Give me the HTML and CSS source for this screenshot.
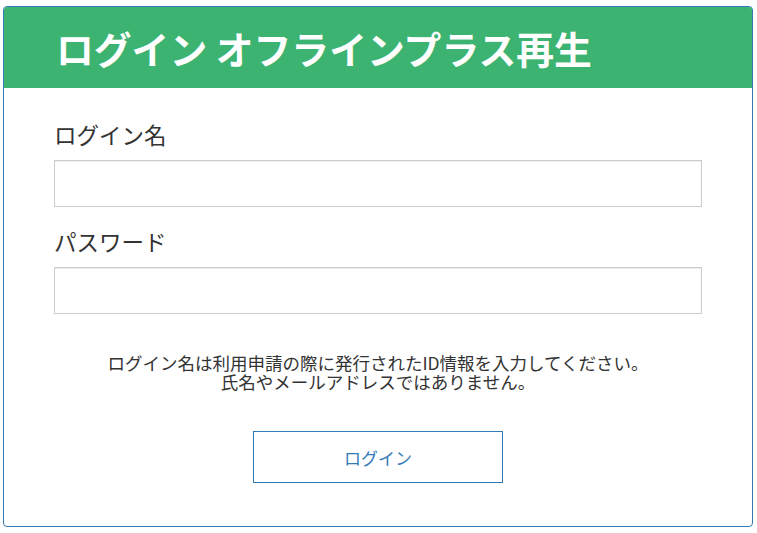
FILE: index.html
```html
<!DOCTYPE html>
<html lang="ja">
<head>
<meta charset="utf-8">
<title>ログイン</title>
<link rel="stylesheet" href="styles.css">
</head>
<body>
<div class="panel">
  <div class="panel-heading">
    <h1 class="panel-title">ログイン オフラインプラス再生</h1>
  </div>
  <form class="panel-body">
    <label class="field-label" for="login">ログイン名</label>
    <input class="field-input" id="login" type="text">
    <label class="field-label field-label-second" for="pass">パスワード</label>
    <input class="field-input" id="pass" type="password">
    <p class="help"><span class="help-line">ログイン名は利用申請の際に発行されたID情報を入力してください。</span><span class="help-line">氏名やメールアドレスではありません。</span></p>
    <button class="btn" type="button">ログイン</button>
  </form>
</div>
</body>
</html>
```
FILE: styles.css
```css
html, body {
  background: #fff;
}
body {
  margin: 6px 4px 0 3px;
  font-family: "Noto Sans CJK JP", "Noto Sans", sans-serif;
  color: #333;
}
.panel {
  width: 750px;
  box-sizing: border-box;
  border: 1px solid #337ab7;
  border-radius: 4px;
  background: #fff;
}
.panel-heading {
  background: #3cb371;
  height: 81px;
  border-radius: 3px 3px 0 0;
  display: flex;
  align-items: center;
  padding-left: 52px;
}
.panel-title {
  margin: 0;
  color: #fff;
  font-size: 37.8px;
  font-weight: 700;
  line-height: 1;
  letter-spacing: 0;
}
.panel-body {
  display: flex;
  flex-direction: column;
  padding: 31px 50px 43px 50px;
  margin: 0;
}
.field-label {
  font-size: 22.5px;
  line-height: 30px;
  color: #333;
  margin-bottom: 11px;
}
.field-label-second {
  margin-top: 19px;
}
.field-input {
  height: 47px;
  box-sizing: border-box;
  border: 1px solid #ccc;
  border-radius: 0;
  margin: 0;
  padding: 6px 12px;
  font-size: 16px;
  font-family: inherit;
  box-shadow: inset 0 1px 1px rgba(0,0,0,.075);
}
.help {
  margin: 39px 0 0;
  display: flex;
  flex-direction: column;
  align-items: center;
  font-size: 17.5px;
  line-height: 19px;
  color: #333;
}
.help-line {
  display: block;
  white-space: nowrap;
}
.btn {
  align-self: center;
  margin-top: 40px;
  width: 250px;
  height: 52px;
  box-sizing: border-box;
  border: 1px solid #337ab7;
  background: #fff;
  color: #337ab7;
  font-family: inherit;
  font-size: 17px;
  cursor: pointer;
  border-radius: 0;
}
```
